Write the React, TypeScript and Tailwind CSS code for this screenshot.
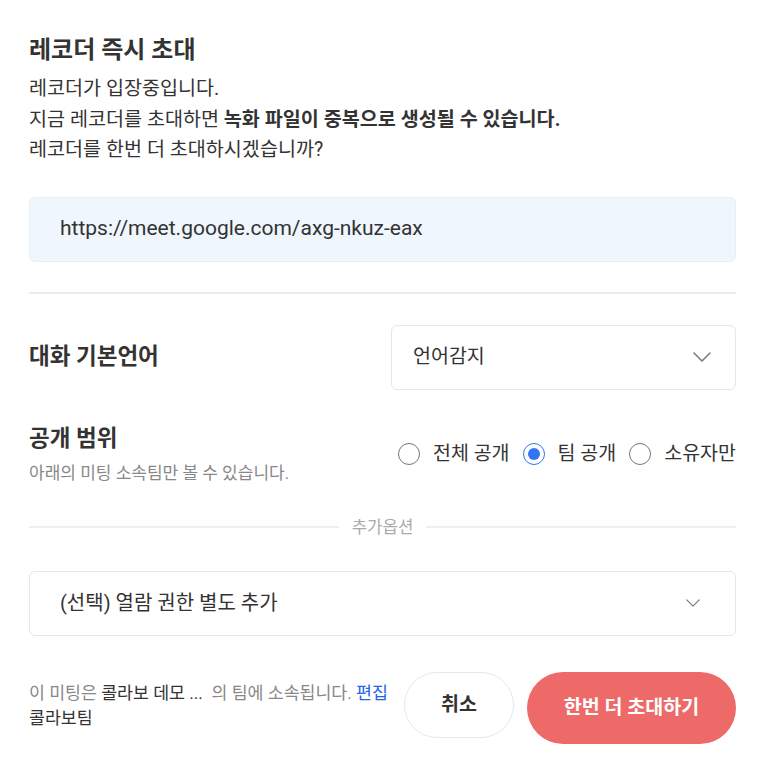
const font = "font-['Roboto','Noto_Sans_CJK_KR',sans-serif]";

function Chevron({ className }: { className?: string }) {
  return (
    <svg className={className} viewBox="0 0 18 10" fill="none" stroke="currentColor" strokeWidth={1.5}>
      <path strokeLinecap="round" strokeLinejoin="round" d="M1 1l8 8 8-8" />
    </svg>
  );
}

function Radio({ label, checked }: { label: string; checked?: boolean }) {
  return (
    <label className="flex items-center gap-[13px]">
      <span
        className={
          checked
            ? "flex h-[22px] w-[22px] items-center justify-center rounded-full border-[1.5px] border-[#3574f0]"
            : "h-[22px] w-[22px] rounded-full border-[1.5px] border-[#777]"
        }
      >
        {checked && <span className="h-[12px] w-[12px] rounded-full bg-[#3574f0]" />}
      </span>
      <span className="text-[19.5px] text-[#333]">{label}</span>
    </label>
  );
}

export default function App() {
  return (
    <div className={`${font} min-h-[775px] w-[765px] bg-white px-[29px] pt-[34px] text-[#222]`}>
      <h1 className="text-[24px] font-bold leading-[32px] text-[#333]">레코더 즉시 초대</h1>
      <div className="mt-[8px] text-[19.6px] leading-[30.5px] text-[#333]">
        <p>레코더가 입장중입니다.</p>
        <p>
          지금 레코더를 초대하면 <span className="font-bold">녹화 파일이 중복으로 생성될 수 있습니다.</span>
        </p>
        <p>레코더를 한번 더 초대하시겠습니까?</p>
      </div>

      <div className="mt-[31px] flex h-[65px] items-center rounded-[6px] border border-[#e8eef5] bg-[#f0f6fd] px-[30px] text-[21px] text-[#333]">
        https://meet.google.com/axg-nkuz-eax
      </div>

      <div className="mt-[30px] h-[2px] bg-[#ececec]" />

      <div className="mt-[31px] flex items-center justify-between">
        <span className="text-[22.5px] font-bold text-[#333]">대화 기본언어</span>
        <div className="flex h-[65px] w-[345px] items-center justify-between rounded-[6px] border border-[#e6e6e6] pl-[21px] pr-[24px]">
          <span className="text-[19.5px] text-[#333]">언어감지</span>
          <Chevron className="h-[10px] w-[18px] text-[#777]" />
        </div>
      </div>

      <div className="mt-[33px] flex items-center justify-between">
        <div>
          <div className="text-[22.5px] font-bold leading-[30px] text-[#333]">공개 범위</div>
          <div className="mt-[8px] text-[17px] leading-[24px] text-[#888]">아래의 미팅 소속팀만 볼 수 있습니다.</div>
        </div>
        <div className="flex items-center gap-[13px]">
          <Radio label="전체 공개" />
          <Radio label="팀 공개" checked />
          <Radio label="소유자만" />
        </div>
      </div>

      <div className="mt-[30px] flex items-center gap-[13px]">
        <div className="h-[2px] flex-1 bg-[#efefef]" />
        <span className="text-[16.8px] leading-[24px] text-[#aaa]">추가옵션</span>
        <div className="h-[2px] flex-1 bg-[#efefef]" />
      </div>

      <div className="mt-[32px] flex h-[65px] items-center justify-between rounded-[6px] border border-[#e6e6e6] pl-[30px] pr-[35px]">
        <span className="text-[20px] text-[#333]">(선택) 열람 권한 별도 추가</span>
        <Chevron className="h-[8px] w-[14px] text-[#777]" />
      </div>

      <div className="mt-[36px] flex items-start">
        <div className="mt-[9px] flex-1 text-[17.3px] leading-[25px]">
          <div>
            <span className="text-[#888]">이 미팅은 </span>
            <span className="text-[#333]">콜라보 데모 ...</span>
            <span className="text-[#888]">&nbsp;&nbsp;의 팀에 소속됩니다. </span>
            <span className="text-[#2563eb]">편집</span>
          </div>
          <div className="text-[#333]">콜라보팀</div>
        </div>
        <button className="h-[66px] w-[110px] rounded-full border border-[#e8e8e8] bg-white text-[19.5px] font-bold text-[#333]">
          취소
        </button>
        <button className="ml-[13px] h-[72px] w-[209px] rounded-full bg-[#ed6a69] text-[19.5px] font-bold text-white">
          한번 더 초대하기
        </button>
      </div>
    </div>
  );
}
